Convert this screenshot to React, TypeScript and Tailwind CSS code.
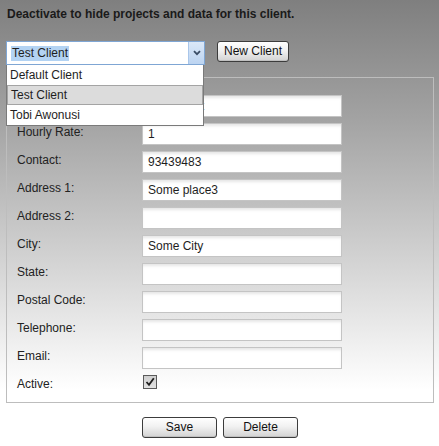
import React from "react";

const rows: { label: string; value: string }[] = [
  { label: "", value: "Test Client" },
  { label: "Hourly Rate:", value: "1" },
  { label: "Contact:", value: "93439483" },
  { label: "Address 1:", value: "Some place3" },
  { label: "Address 2:", value: "" },
  { label: "City:", value: "Some City" },
  { label: "State:", value: "" },
  { label: "Postal Code:", value: "" },
  { label: "Telephone:", value: "" },
  { label: "Email:", value: "" },
];

function Btn({ children, w }: { children: React.ReactNode; w: string }) {
  return (
    <button
      className={`${w} h-[21px] rounded-[3px] border border-[#3c3c3c] bg-[linear-gradient(to_bottom,#ffffff,#f1f1f1_45%,#d2d2d2)] text-[12px] leading-[19px] text-[#111] text-center shadow-[inset_0_-1px_0_#c0c0c0]`}
    >
      {children}
    </button>
  );
}

export default function App() {
  return (
    <div className="w-[439px] h-[446px] overflow-hidden bg-[linear-gradient(to_bottom,#7f7f7f_0px,#a3a3a3_120px,#ffffff_390px)] font-['Liberation_Sans',Arial,sans-serif] text-[#1e1e1e]">
      <p className="pt-[7px] pl-[7px] text-[12px] leading-[14px] font-bold text-[#1a1a1a]">
        Deactivate to hide projects and data for this client.
      </p>

      <div className="flex items-start pl-[6px] pt-[20px] gap-[12px]">
        <div className="relative w-[199px] h-[24px] z-10">
          <div className="flex h-[24px] w-[199px] border border-[#7fa6d4] bg-white">
            <div className="flex-1 flex items-center pl-[4px]">
              <span className="bg-[#b3d3f3] px-[1px] text-[12px] leading-[15px] text-[#1e1e1e]">
                Test Client
              </span>
            </div>
            <div className="w-[16px] h-full border-l border-[#a9c6ea] bg-[linear-gradient(to_bottom,#dbe8f8,#bcd4f1)] flex items-center justify-center">
              <svg width="8" height="6" viewBox="0 0 8 6">
                <path d="M1 1.2 L4 4.2 L7 1.2" fill="none" stroke="#3a4d66" strokeWidth="1.8" />
              </svg>
            </div>
          </div>
          <div className="absolute left-0 top-[24px] w-[198px] border border-t-0 border-[#7a7a7a] bg-white text-[12px] leading-[20px]">
            <div className="h-[20px] pl-[3px]">Default Client</div>
            <div className="h-[20px] pl-[3px] bg-[#dcdcdc] border border-[#a4a4a4] leading-[18px]">
              Test Client
            </div>
            <div className="h-[20px] pl-[3px]">Tobi Awonusi</div>
          </div>
        </div>
        <Btn w="w-[72px]">New Client</Btn>
      </div>

      <div className="mx-[6px] mt-[12px] w-[428px] h-[326px] border border-[#bdbdbd] pt-[17px] pl-[10px]">
        <div className="flex flex-col gap-[6px]">
          {rows.map((r, i) => (
            <div key={i} className="flex items-start h-[22px]">
              <div className="w-[125px] pt-[2px] text-[12px] leading-[14px] text-[#222]">{r.label}</div>
              <div className="w-[200px] h-[22px] border border-[#c4c4c4] bg-white shadow-[inset_0_3px_3px_-1px_rgba(0,0,0,0.10)] pl-[5px] text-[12px] leading-[20px] text-[#1e1e1e]">
                {r.value}
              </div>
            </div>
          ))}
          <div className="flex items-start h-[22px]">
            <div className="w-[125px] pt-[2px] text-[12px] leading-[14px] text-[#222]">Active:</div>
            <div className="ml-[1px] w-[14px] h-[14px] border border-[#5a5a5a] bg-[linear-gradient(to_bottom,#cfcfcf,#e2e2e2)] flex items-center justify-center">
              <svg width="10" height="10" viewBox="0 0 10 10">
                <path d="M1.5 5 L4 7.8 L8.8 1.2" fill="none" stroke="#1e1e1e" strokeWidth="1.8" />
              </svg>
            </div>
          </div>
        </div>
      </div>

      <div className="flex gap-[6px] pl-[142px] pt-[14px]">
        <Btn w="w-[75px]">Save</Btn>
        <Btn w="w-[75px]">Delete</Btn>
      </div>
    </div>
  );
}
